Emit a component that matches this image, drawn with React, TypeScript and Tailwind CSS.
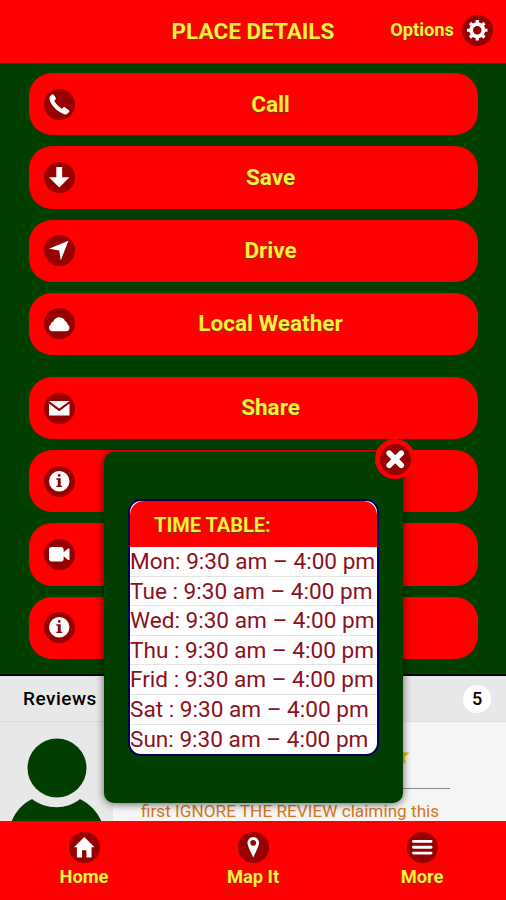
import type { ReactNode } from "react";
import clsx from "clsx";

const icons: Record<string, ReactNode> = {
  phone: (
    <path d="M1.2 1.1 2.200.3C2.600 0 3 .1 3.200.5L4.700 2.700c.2.4.1.8-.2 1l-.9.8c.7 1.800 3 4.400 5.200 5.600l.9-.9c.3-.3.7-.4 1.100-.1l2.800 2c.4.3.5.7.2 1.100l-1.100 1.200c-.6.6-1.400.8-2.300.4C5.400 12 1.300 7.800.4 3.800.1 2.700.4 1.700 1.200 1.100z" />
  ),
  arrow: <path d="M9 7V0H5v7H0l7 7 7-7z" />,
  nav: <path d="M13.300.500 0 6l7 1.200L8 14z" />,
  cloud: (
    <path d="M14 9.500c0-.9-.5-1.700-1.200-2.100C12.600 6 12 5.100 10.900 4.700 10.300 3.300 8.800 2.300 7 2.300S3.500 3.400 2.900 5.200C1.800 5.600 1.200 6.300 1.100 7.300.400 7.700 0 8.400 0 9.300c0 1.500 1 2.500 2.400 2.500h9.300c1.300 0 2.300-1 2.300-2.300z" />
  ),
  mail: <path d="M0 3.750V12h14V3.750L7 9zM14 2H0l7 5.250z" />,
  info: (
    <path
      fillRule="evenodd"
      d="M7 0a7 7 0 1 0 0 14A7 7 0 0 0 7 0zm0 2a1 1 0 1 1 0 2 1 1 0 0 1 0-2zm2 9H5v-1h1V6H5V5h3v5h1z"
    />
  ),
  video: <path d="M8 2H2a2 2 0 0 0-2 2v6c0 1.100.9 2 2 2h6a2 2 0 0 0 2-2V8.300l3 2.700h1V3h-1l-3 2.700V4a2 2 0 0 0-2-2z" />,
  home: <path d="M7 0 0 7h2v7h3.500V9h3v5H12V7h2z" />,
  pin: (
    <path
      fillRule="evenodd"
      d="M7 0a4 4 0 0 0-4 4c0 2.200 4 10 4 10s4-7.800 4-10a4 4 0 0 0-4-4zm0 6a2 2 0 1 1 0-4 2 2 0 0 1 0 4z"
    />
  ),
  bars: <path d="M1 3h12M1 7h12M1 11h12" stroke="currentColor" strokeWidth="2" strokeLinecap="round" />,
  close: <path d="m2.900 2.900 8.200 8.200m0-8.200-8.200 8.200" stroke="currentColor" strokeWidth="3.900" strokeLinecap="round" strokeLinejoin="round" />,
  gear: (
    <g fill="none" stroke="currentColor">
      <circle cx="7" cy="7" r="4.200" strokeWidth="2.600" />
      <path
        d="M7 0v2.500M7 11.500V14M0 7h2.500M11.500 7H14M2.050 2.050l1.800 1.800M10.150 10.150l1.800 1.800M2.050 11.950l1.800-1.800M10.150 3.850l1.800-1.800"
        strokeWidth="2.200"
      />
    </g>
  ),
};

function Icon({ name }: { name: string }) {
  return (
    <span className="flex size-[31px] shrink-0 items-center justify-center rounded-full bg-[#960000] text-white">
      <svg viewBox="0 0 14 14" className="size-[20.500px] overflow-visible" fill="currentColor">
        {icons[name]}
      </svg>
    </span>
  );
}

function PlaceButton({ icon, label, className }: { icon: string; label?: string; className?: string }) {
  return (
    <button className={clsx("flex h-[62.300px] w-full shrink-0 items-center rounded-[23px] bg-[#fe0000] pl-[15px]", className)}>
      <Icon name={icon} />
      <span className="flex-1 pr-[12px] pb-px text-center text-[22.500px] font-bold leading-none">{label}</span>
    </button>
  );
}

const hours = [
  "Mon: 9:30 am – 4:00 pm",
  "Tue : 9:30 am – 4:00 pm",
  "Wed: 9:30 am – 4:00 pm",
  "Thu : 9:30 am – 4:00 pm",
  "Frid : 9:30 am – 4:00 pm",
  "Sat : 9:30 am – 4:00 pm",
  "Sun: 9:30 am – 4:00 pm",
];

export default function App() {
  return (
    <main className="relative flex h-[900px] w-[506px] flex-col overflow-hidden bg-[#003f00] font-[Roboto,sans-serif] text-[#fdee36] [&_button]:[text-shadow:0_1px_1px_#6b3a20]">
      {/* header */}
      <header className="grid h-[63px] shrink-0 grid-cols-[1fr_auto_1fr] items-center bg-[#fe0000] [text-shadow:0_1px_1px_#6b3a20]">
        <div></div>
        <h1 className="text-[22.500px] font-bold">PLACE DETAILS</h1>
        <div className="flex items-center justify-end gap-2 pr-[13px] pb-[3px]">
          <span className="text-[18.300px] font-bold">Options</span>
          <Icon name="gear" />
        </div>
      </header>

      {/* actions */}
      <div className="flex h-[611px] shrink-0 flex-col gap-[10.900px] pt-[10.200px] pl-[29px] pr-[28px]">
        <PlaceButton icon="phone" label="Call" />
        <PlaceButton icon="arrow" label="Save" />
        <PlaceButton icon="nav" label="Drive" />
        <PlaceButton icon="cloud" label="Local Weather" />
        <PlaceButton icon="mail" label="Share" className="mt-[11px]" />
        <PlaceButton icon="info" />
        <PlaceButton icon="video" />
        <PlaceButton icon="info" />
      </div>

      {/* reviews */}
      <div className="flex h-[48px] shrink-0 items-center justify-between border-t-2 border-b border-t-black border-b-[#dedede] bg-[#e8e8e8] pl-[23px] pr-[15px] text-black">
        <span className="pt-[2px] text-[19px] font-medium tracking-[0.500px]">Reviews</span>
        <span className="flex size-[28px] items-center justify-center rounded-full bg-white text-[18px] font-medium">5</span>
      </div>
      <div className="flex h-[99px] shrink-0 overflow-hidden bg-[#f5f5f5]">
        <div className="w-[113px] shrink-0 bg-[#e8e8e8]">
          <svg width="113" height="99" viewBox="0 0 113 99" fill="#003f00">
            <circle cx="57" cy="46" r="29.500" />
            <path d="M32 77C22 82 15 90 11 101h91c-4-11-12-19-22-24-13 11-34 11-48 0z" />
          </svg>
        </div>
        <div className="flex w-[337px] flex-col pl-[28px]">
          <div className="flex h-[67px] shrink-0 items-center justify-end border-b border-[#888] pr-[40px]">
            <svg viewBox="0 0 24 24" className="size-[20px]" fill="#e6c800">
              <path d="m12 1 3.200 7.500 8.300.7-6.300 5.400 1.900 8.100L12 18.400l-7.100 4.300 1.900-8.100L.500 9.200l8.300-.7z" />
            </svg>
          </div>
          <p className="mt-[12px] whitespace-nowrap text-[17.200px] leading-[20px] text-[#d3761f]">first IGNORE THE REVIEW claiming this</p>
        </div>
      </div>

      {/* bottom nav */}
      <footer className="flex min-h-0 flex-1 justify-between bg-[#fe0000] pl-[44px] pr-[44px] pt-[11px]">
        <button className="flex w-[80px] flex-col items-center text-[18.300px] font-bold leading-[27px]"><Icon name="home" />Home</button>
        <button className="flex w-[80px] flex-col items-center text-[18.300px] font-bold leading-[27px]"><Icon name="pin" />Map It</button>
        <button className="flex w-[80px] flex-col items-center text-[18.300px] font-bold leading-[27px]"><Icon name="bars" />More</button>
      </footer>

      {/* popup */}
      <section className="absolute left-[104px] top-[452px] h-[351px] w-[299px] rounded-[10px] bg-[#003f00] px-[24px] pt-[47px] shadow-[0_1px_8px_rgba(0,0,0,0.6)]">
        <button className="absolute -right-[12px] -top-[13px] flex size-[40px] items-center justify-center rounded-full bg-[#fe0000]">
          <Icon name="close" />
        </button>
        <div className="h-[257px] w-[251px] overflow-hidden rounded-[13px] border-2 border-[#00005c] bg-white">
          <h2 className="h-[46px] rounded-t-[14px] bg-[#fe0000] pl-[24px] text-[20px] font-bold leading-[49px] [text-shadow:0_1px_1px_#6b3a20]">TIME TABLE:</h2>
          <ul className="text-[22.600px] leading-[29.500px] text-[#8c1020]">
            {hours.map((h) => (
              <li key={h} className="h-[29.600px] whitespace-nowrap border-b border-[#e4e4e4] last:border-0">{h}</li>
            ))}
          </ul>
        </div>
      </section>
    </main>
  );
}
